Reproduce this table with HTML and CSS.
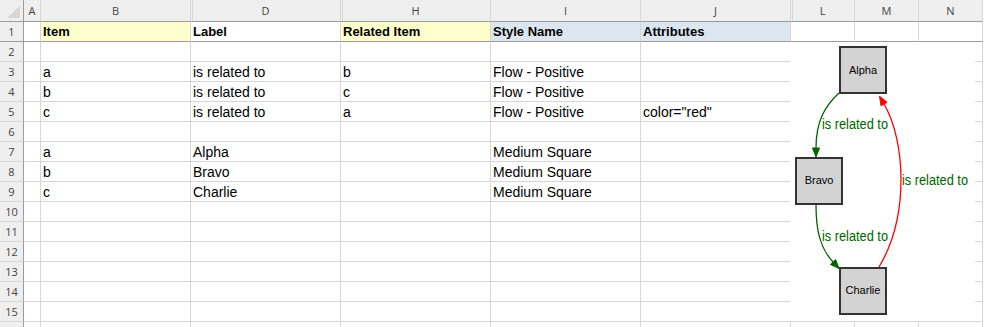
FILE: index.html
```html
<!DOCTYPE html>
<html lang="en">
<head>
    <meta charset="UTF-8">
    <title>Relationships</title>
    <link rel="stylesheet" href="styles.css">
</head>
<body>
    <div class="sheet">
        <!-- column headers -->
        <div class="corner"><span class="tri"></span></div>
        <div class="ch">A</div>
        <div class="ch">B</div>
        <div class="ch gap">D</div>
        <div class="ch gap">H</div>
        <div class="ch">I</div>
        <div class="ch">J</div>
        <div class="ch gap">L</div>
        <div class="ch">M</div>
        <div class="ch">N</div>

        <!-- row 1 -->
        <div class="rh top">1</div>
        <div class="c top"></div>
        <div class="c top b yellow">Item</div>
        <div class="c top b">Label</div>
        <div class="c top b yellow">Related Item</div>
        <div class="c top b blue">Style Name</div>
        <div class="c top b blue">Attributes</div>
        <div class="c top"></div>
        <div class="c top"></div>
        <div class="c top"></div>

        <div class="rh">2</div>
        <div class="c"></div><div class="c"></div><div class="c"></div><div class="c"></div><div class="c"></div><div class="c"></div><div class="c"></div><div class="c"></div><div class="c"></div>

        <div class="rh">3</div>
        <div class="c"></div><div class="c">a</div><div class="c">is related to</div><div class="c">b</div><div class="c">Flow - Positive</div><div class="c"></div><div class="c"></div><div class="c"></div><div class="c"></div>

        <div class="rh">4</div>
        <div class="c"></div><div class="c">b</div><div class="c">is related to</div><div class="c">c</div><div class="c">Flow - Positive</div><div class="c"></div><div class="c"></div><div class="c"></div><div class="c"></div>

        <div class="rh">5</div>
        <div class="c"></div><div class="c">c</div><div class="c">is related to</div><div class="c">a</div><div class="c">Flow - Positive</div><div class="c">color="red"</div><div class="c"></div><div class="c"></div><div class="c"></div>

        <div class="rh">6</div>
        <div class="c"></div><div class="c"></div><div class="c"></div><div class="c"></div><div class="c"></div><div class="c"></div><div class="c"></div><div class="c"></div><div class="c"></div>

        <div class="rh">7</div>
        <div class="c"></div><div class="c">a</div><div class="c">Alpha</div><div class="c"></div><div class="c">Medium Square</div><div class="c"></div><div class="c"></div><div class="c"></div><div class="c"></div>

        <div class="rh">8</div>
        <div class="c"></div><div class="c">b</div><div class="c">Bravo</div><div class="c"></div><div class="c">Medium Square</div><div class="c"></div><div class="c"></div><div class="c"></div><div class="c"></div>

        <div class="rh">9</div>
        <div class="c"></div><div class="c">c</div><div class="c">Charlie</div><div class="c"></div><div class="c">Medium Square</div><div class="c"></div><div class="c"></div><div class="c"></div><div class="c"></div>

        <div class="rh">10</div>
        <div class="c"></div><div class="c"></div><div class="c"></div><div class="c"></div><div class="c"></div><div class="c"></div><div class="c"></div><div class="c"></div><div class="c"></div>
        <div class="rh">11</div>
        <div class="c"></div><div class="c"></div><div class="c"></div><div class="c"></div><div class="c"></div><div class="c"></div><div class="c"></div><div class="c"></div><div class="c"></div>
        <div class="rh">12</div>
        <div class="c"></div><div class="c"></div><div class="c"></div><div class="c"></div><div class="c"></div><div class="c"></div><div class="c"></div><div class="c"></div><div class="c"></div>
        <div class="rh">13</div>
        <div class="c"></div><div class="c"></div><div class="c"></div><div class="c"></div><div class="c"></div><div class="c"></div><div class="c"></div><div class="c"></div><div class="c"></div>
        <div class="rh">14</div>
        <div class="c"></div><div class="c"></div><div class="c"></div><div class="c"></div><div class="c"></div><div class="c"></div><div class="c"></div><div class="c"></div><div class="c"></div>
        <div class="rh">15</div>
        <div class="c"></div><div class="c"></div><div class="c"></div><div class="c"></div><div class="c"></div><div class="c"></div><div class="c"></div><div class="c"></div><div class="c"></div>
        <div class="rh"></div>
        <div class="c"></div><div class="c"></div><div class="c"></div><div class="c"></div><div class="c"></div><div class="c"></div><div class="c"></div><div class="c"></div><div class="c"></div>

        <!-- graph picture floating over the sheet -->
        <svg class="diagram" width="185" height="279" viewBox="0 0 185 279">
            <!-- edges -->
            <path class="edge green" d="M49,51 C35,64 26,79 26,106"/>
            <polygon class="head green" points="26,115 22.5,106 29.5,106"/>
            <path class="edge green" d="M26,163 C26,188 30,206 43,220"/>
            <polygon class="head green" points="49.1,226.6 40.4,222.4 45.6,217.6"/>
            <path class="edge red" d="M89,225 C120,173 115,98 94,62"/>
            <polygon class="head red" points="89.5,54.2 97,60.2 91,63.8"/>

            <text class="lbl" x="32" y="87" textLength="66" lengthAdjust="spacingAndGlyphs">is related to</text>
            <text class="lbl" x="32" y="198.5" textLength="66" lengthAdjust="spacingAndGlyphs">is related to</text>
            <text class="lbl" x="112" y="142.5" textLength="66" lengthAdjust="spacingAndGlyphs">is related to</text>

            <!-- nodes -->
            <rect class="node" x="50" y="5" width="46" height="46"/>
            <text class="name" x="73" y="31.5">Alpha</text>
            <rect class="node" x="6" y="116" width="46" height="46"/>
            <text class="name" x="29" y="142">Bravo</text>
            <rect class="node" x="50" y="226" width="46" height="46"/>
            <text class="name" x="73" y="252">Charlie</text>
        </svg>
    </div>
</body>
</html>
```

FILE: styles.css
```css
body {
    margin: 0;
    overflow: hidden;
    background: #fff;
}
.sheet {
    position: relative;
    display: grid;
    grid-template-columns: 24px 17px repeat(5, 150px) repeat(3, 64px);
    grid-template-rows: 22px repeat(16, 20px);
}
.corner, .ch, .rh, .c {
    box-sizing: border-box;
    overflow: hidden;
    white-space: nowrap;
}
.corner {
    display: flex;
    justify-content: flex-end;
    align-items: flex-end;
    padding: 0 3px 3px 0;
    background: #efefef;
    border-right: 1px solid #9b9b9b;
    border-bottom: 1px solid #9b9b9b;
}
.tri {
    width: 13px;
    height: 13px;
    background: linear-gradient(135deg, transparent 50%, #d6d6d6 50%);
}
.ch {
    background: #efefef;
    border-right: 1px solid #d6d6d6;
    border-bottom: 1px solid #9b9b9b;
    text-align: center;
    font: 11px/21px "Open Sans", sans-serif;
    color: #444;
}
.ch.gap {
    box-shadow: inset 1px 0 #efefef, inset 2px 0 #d6d6d6;
}
.rh {
    background: #efefef;
    border-right: 1px solid #9b9b9b;
    border-bottom: 1px solid #d6d6d6;
    text-align: center;
    font: 11px/20px "Open Sans", sans-serif;
    color: #444;
}
.c {
    border-right: 1px solid #d6d6d6;
    border-bottom: 1px solid #d6d6d6;
    padding-left: 2px;
    font: 14px/20px "Liberation Sans", Arial, sans-serif;
    color: #000;
}
.rh.top, .c.top {
    border-bottom-color: #9b9b9b;
}
.c.b {
    font-weight: bold;
    font-size: 13px;
}
.yellow {
    background: #ffffcc;
}
.blue {
    background: #dce6f1;
}
.diagram {
    position: absolute;
    left: 790px;
    top: 42px;
    background: #fff;
}
.edge {
    fill: none;
    stroke-width: 1.3;
}
.edge.green {
    stroke: #006400;
}
.edge.red {
    stroke: #ff0000;
}
.head.green {
    fill: #006400;
    stroke: #006400;
}
.head.red {
    fill: #ff0000;
    stroke: #ff0000;
}
.lbl {
    font: 14px "Liberation Sans", Arial, sans-serif;
    fill: #006400;
}
.node {
    fill: #d3d3d3;
    stroke: #333;
    stroke-width: 2;
}
.name {
    font: 11px "Liberation Sans", Arial, sans-serif;
    fill: #000;
    text-anchor: middle;
}
```
